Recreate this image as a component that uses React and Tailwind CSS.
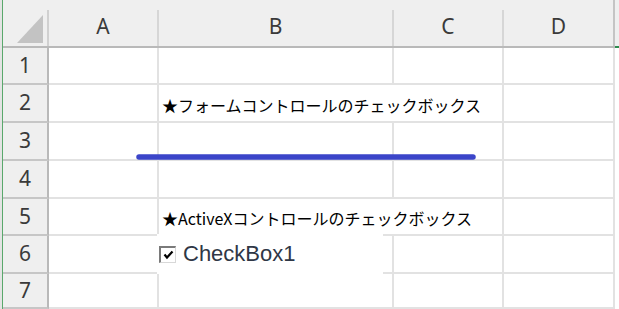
import React from "react";

const HEAD_BG = "bg-[#efefef]";

function Edge({ top }) {
  return (
    <div className="flex h-full">
      <div className="w-[2px] h-full bg-[#e4e4e4]" />
      <div className="w-[1px] h-full bg-[#5aa86c]" />
    </div>
  );
}

function ColHead({ label, dark }) {
  return (
    <div className={`flex h-full ${HEAD_BG} border-b-2 border-[#b9b9b9]`}>
      <div className="flex-1 flex items-center justify-center pt-[8px] text-[21px] text-[#3a3a3a]" style={{ fontFamily: '"Noto Sans", "Open Sans", sans-serif' }}>
        {label}
      </div>
      {dark ? (
        <div className="w-[2px] h-full bg-[#c4c4c4]" />
      ) : (
        <div className="w-[2px] h-[36px] self-end bg-[#d6d6d6]" />
      )}
    </div>
  );
}

function RowHead({ n }) {
  return (
    <div className={`flex items-center justify-center h-full ${HEAD_BG} border-b-2 border-r-2 border-b-[#c6c6c6] border-r-[#b9b9b9] text-[21px] text-[#3a3a3a]`} style={{ fontFamily: '"Noto Sans", "Open Sans", sans-serif' }}>
      {n}
    </div>
  );
}

function Cell({ children, noRight }) {
  return (
    <div className={`h-full min-w-0 border-b-2 border-[#e2e2e2] ${noRight ? "" : "border-r-2"} flex items-center`}>
      {children}
    </div>
  );
}

const jp = { fontFamily: '"Noto Sans CJK JP", "Noto Sans", sans-serif' };

export default function App() {
  const rows = [1, 2, 3, 4, 5, 6, 7];
  return (
    <div className="relative w-[619px] h-[309px] overflow-hidden bg-white">
      <div className="grid grid-cols-[3px_46px_110px_235px_110px_111px_4px] grid-rows-[48px_37px_38px_38px_38px_37px_38px_35px] w-full h-full">
        {/* header row */}
        <Edge />
        <div className={`relative h-full ${HEAD_BG} border-b-2 border-[#b9b9b9] flex`}>
          <svg width="44" height="46" className="block">
            <polygon points="14,43 40,43 40,15" fill="#c3c3c3" />
          </svg>
          <div className="w-[2px] h-[36px] self-end bg-[#d0d0d0]" />
        </div>
        <ColHead label="A" />
        <ColHead label="B" />
        <ColHead label="C" />
        <ColHead label="D" dark />
        <div className={`h-full ${HEAD_BG} flex flex-col justify-end`}>
          <div className="h-[2px] bg-[#2e8b4e]" />
        </div>

        {rows.map((n) => (
          <React.Fragment key={n}>
            <Edge />
            <RowHead n={n} />
            <Cell />
            <Cell noRight={n === 2 || n === 5}>
              {n === 2 && (
                <span className="pl-[3px] pt-[3px] whitespace-nowrap text-[16px] leading-none text-black" style={jp}>
                  ★フォームコントロールのチェックボックス
                </span>
              )}
              {n === 5 && (
                <span className="pl-[3px] pt-[3px] whitespace-nowrap text-[16px] leading-none text-black" style={jp}>
                  ★ActiveXコントロールのチェックボックス
                </span>
              )}
            </Cell>
            <Cell />
            <Cell />
            <div className="h-full bg-white" />
          </React.Fragment>
        ))}
      </div>

      {/* drawn line shape */}
      <svg className="absolute left-0 top-0 pointer-events-none" width="619" height="309">
        <line x1="139" y1="157" x2="473" y2="157" stroke="#3b45c9" strokeWidth="5.5" strokeLinecap="round" />
      </svg>

      {/* ActiveX checkbox control */}
      <div className="absolute left-[157px] top-[234px] w-[226px] h-[40px] bg-white flex items-center">
        <div className="ml-[2px] w-[17px] h-[17px] border-t-2 border-l-2 border-b border-r border-t-[#7a7a7a] border-l-[#7a7a7a] border-b-[#d8d8d8] border-r-[#d8d8d8] bg-white flex items-center justify-center">
          <svg width="11" height="10" viewBox="0 0 11 10">
            <path d="M1.5 4.5 L4 7.5 L9.5 1.5" fill="none" stroke="#000" strokeWidth="2.2" />
          </svg>
        </div>
        <span className="ml-[7px] text-[22px] leading-none text-[#2f3746]" style={{ fontFamily: '"Liberation Sans", Arial, sans-serif' }}>
          CheckBox1
        </span>
      </div>
    </div>
  );
}
